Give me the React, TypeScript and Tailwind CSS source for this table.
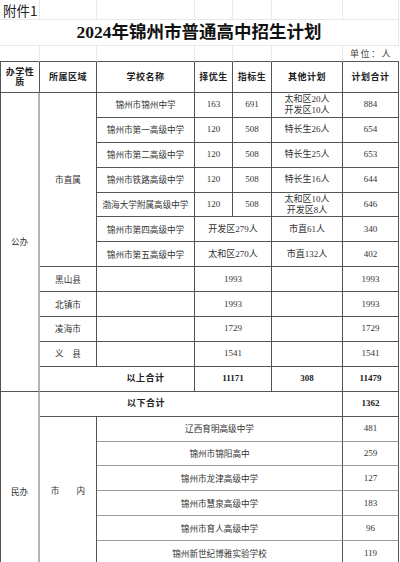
const cjk = "font-['Noto_Sans_CJK_SC',sans-serif]";
const num = "font-['Liberation_Serif','Noto_Sans_CJK_SC',serif]";

// every cell owns its right and bottom line
const cell = "p-0 text-center align-middle border-r border-b border-[#555]";
const grayLeft = "border-r-2 border-r-[#b4b4b4]";
const faint = "p-0 border-r border-b border-[#e8e8e8]";

const topSchools = [
  { name: "锦州市锦州中学", a: "163", b: "691", other: ["太和区20人", "开发区10人"], total: "884" },
  { name: "锦州市第一高级中学", a: "120", b: "508", other: ["特长生26人"], total: "654" },
  { name: "锦州市第二高级中学", a: "120", b: "508", other: ["特长生25人"], total: "653" },
  { name: "锦州市铁路高级中学", a: "120", b: "508", other: ["特长生16人"], total: "644" },
  { name: "渤海大学附属高级中学", a: "120", b: "508", other: ["太和区10人", "开发区8人"], total: "646" },
];

const mergedSchools = [
  { name: "锦州市第四高级中学", quota: "开发区279人", other: "市直61人", total: "340" },
  { name: "锦州市第五高级中学", quota: "太和区270人", other: "市直132人", total: "402" },
];

const counties = [
  { name: "黑山县", quota: "1993", total: "1993" },
  { name: "北镇市", quota: "1993", total: "1993" },
  { name: "凌海市", quota: "1729", total: "1729" },
  { name: "义　县", quota: "1541", total: "1541" },
];

const privateSchools = [
  { name: "辽西育明高级中学", total: "481" },
  { name: "锦州市锦阳高中", total: "259" },
  { name: "锦州市龙津高级中学", total: "127" },
  { name: "锦州市慧泉高级中学", total: "183" },
  { name: "锦州市育人高级中学", total: "96" },
  { name: "锦州新世纪博雅实验学校", total: "119" },
];

const headers = ["所属区域", "学校名称", "择优生", "指标生", "其他计划", "计划合计"];

export default function App() {
  return (
    <div className="w-[400px] h-[562px] overflow-hidden bg-white text-[#333]">
      <table className="table-fixed border-separate border-spacing-0 w-[399px]">
        <colgroup>
          <col className="w-[40px]" />
          <col className="w-[57px]" />
          <col className="w-[98px]" />
          <col className="w-[38px]" />
          <col className="w-[39px]" />
          <col className="w-[71px]" />
          <col className="w-[56px]" />
        </colgroup>
        <tbody>
          <tr className="h-[20px]">
            <td className={`${faint} pl-[3px] pt-[2px] text-left text-[13.5px] leading-none text-[#222] ${cjk}`}>附件1</td>
            {[0, 1, 2, 3, 4, 5].map((i) => (
              <td key={i} className={faint} />
            ))}
          </tr>
          <tr className="h-[26px]">
            <td colSpan={7} className={`${faint} text-center text-[17.5px] leading-none font-bold text-[#111] ${num}`}>
              2024年锦州市普通高中招生计划
            </td>
          </tr>
          <tr className="h-[16px]">
            {[0, 1, 2, 3, 4, 5].map((i) => (
              <td key={i} className="p-0 border-r border-r-[#e8e8e8] border-b border-b-[#555]" />
            ))}
            <td className={`p-0 border-b border-[#555] text-center text-[9px] leading-none tracking-[1.5px] text-[#444] ${cjk}`}>
              单位：人
            </td>
          </tr>

          <tr className={`h-[31px] text-[9px] font-bold leading-[10px] tracking-[0.5px] text-[#222] ${num}`}>
            <td className={`${cell} border-l`}>
              办学性
              <br />质
            </td>
            {headers.map((h) => (
              <td key={h} className={cell}>
                {h}
              </td>
            ))}
          </tr>

          {topSchools.map((s, i) => (
            <tr key={s.name} className="h-[24.9px] text-[8.6px] leading-[11px]">
              {i === 0 && (
                <>
                  <td rowSpan={12} className={`${cell} border-l ${grayLeft} ${cjk}`}>
                    公办
                  </td>
                  <td rowSpan={7} className={`${cell} ${cjk}`}>
                    市直属
                  </td>
                </>
              )}
              <td className={`${cell} ${cjk} whitespace-nowrap`}>{s.name}</td>
              <td className={`${cell} ${num} text-[9px]`}>{s.a}</td>
              <td className={`${cell} ${num} text-[9px]`}>{s.b}</td>
              <td className={`${cell} ${num} text-[9px]`}>
                {s.other.map((o) => (
                  <div key={o}>{o}</div>
                ))}
              </td>
              <td className={`${cell} ${num} text-[9px]`}>{s.total}</td>
            </tr>
          ))}

          {mergedSchools.map((s) => (
            <tr key={s.name} className="h-[24.9px] text-[8.6px] leading-[11px]">
              <td className={`${cell} ${cjk} whitespace-nowrap`}>{s.name}</td>
              <td colSpan={2} className={`${cell} ${num} text-[9px]`}>
                {s.quota}
              </td>
              <td className={`${cell} ${num} text-[9px]`}>{s.other}</td>
              <td className={`${cell} ${num} text-[9px]`}>{s.total}</td>
            </tr>
          ))}

          {counties.map((c) => (
            <tr key={c.name} className="h-[24.9px] text-[8.6px] leading-[11px]">
              <td className={`${cell} ${cjk}`}>{c.name}</td>
              <td className={cell} />
              <td colSpan={2} className={`${cell} ${num} text-[9px]`}>
                {c.quota}
              </td>
              <td className={cell} />
              <td className={`${cell} ${num} text-[9px]`}>{c.total}</td>
            </tr>
          ))}

          <tr className={`h-[25px] text-[9px] font-bold leading-none text-[#222] ${num}`}>
            <td className="p-0 border-b border-[#555]" />
            <td className={`${cell} tracking-[0.5px]`}>以上合计</td>
            <td colSpan={2} className={cell}>
              11171
            </td>
            <td className={cell}>308</td>
            <td className={cell}>11479</td>
          </tr>

          <tr className={`h-[24.9px] text-[9px] font-bold leading-none text-[#222] ${num}`}>
            <td rowSpan={8} className={`${cell} border-l ${grayLeft} font-normal text-[8.6px] text-[#333] ${cjk}`}>
              民办
            </td>
            <td className="p-0 border-b border-[#555]" />
            <td className="p-0 border-b border-[#555] text-center tracking-[0.5px]">以下合计</td>
            <td colSpan={3} className={cell} />
            <td className={cell}>1362</td>
          </tr>

          {privateSchools.map((s, i) => (
            <tr key={s.name} className="h-[24.9px] text-[8.6px] leading-[11px]">
              {i === 0 && (
                <td rowSpan={6} className={`${cell} ${cjk}`}>
                  市　　内
                </td>
              )}
              <td colSpan={4} className={`p-0 text-center align-middle border-r border-r-[#555] border-b border-b-[#9a9a9a] ${cjk}`}>
                {s.name}
              </td>
              <td className={`${cell} border-b-[#9a9a9a] ${num} text-[9px]`}>{s.total}</td>
            </tr>
          ))}

          <tr className="h-[24.9px]">
            <td className={cell} />
            <td colSpan={4} className={cell} />
            <td className={cell} />
          </tr>
        </tbody>
      </table>
    </div>
  );
}
